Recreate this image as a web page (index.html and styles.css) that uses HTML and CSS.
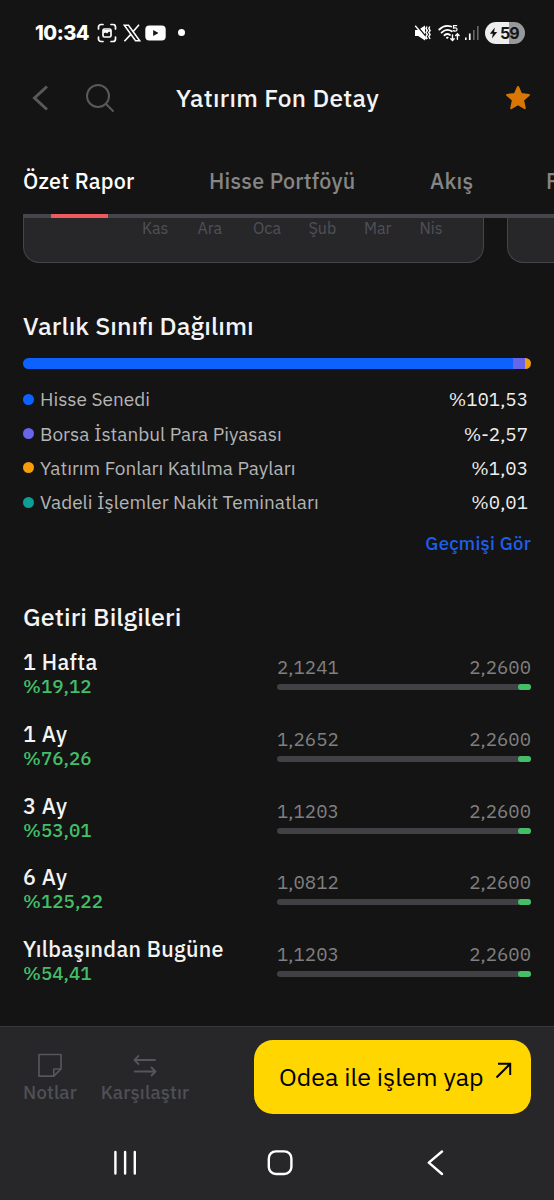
FILE: index.html
```html
<!DOCTYPE html>
<html lang="tr">
<head>
    <meta charset="UTF-8">
    <title>Yatırım Fon Detay</title>
    <link rel="stylesheet" href="styles.css">
</head>
<body>
    <div class="status-bar">
        <span class="clock">10:34</span>
        <svg class="capture" width="20" height="20" viewBox="0 0 20 20" fill="none" stroke="#fff" stroke-width="1.7" stroke-linecap="round">
            <path d="M1.5 6V4a2.5 2.5 0 0 1 2.5-2.5h2M14 1.5h2A2.5 2.5 0 0 1 18.5 4v2M18.5 14v2a2.5 2.5 0 0 1-2.5 2.5h-2M6 18.5H4A2.5 2.5 0 0 1 1.5 16v-2"/>
            <rect x="6" y="6" width="8" height="8" rx="1.5"/>
            <path d="M6.5 7h7v2.500l-1.500-1-2 2-1.500-1-2 1z" fill="#fff" stroke="none"/>
        </svg>
        <svg class="x-logo" width="18" height="18" viewBox="0 0 18 18" fill="none" stroke="#fff">
            <path d="M1.3 1.2h4.2l11.2 15.6h-4.2z" stroke-width="1.5"/>
            <path d="M16 .8L10.2 7.6M7.6 10.6L1.4 17.3" stroke-width="1.6"/>
        </svg>
        <svg class="video" width="21" height="16" viewBox="0 0 21 16">
            <rect x=".3" y=".6" width="20.4" height="14.8" rx="4" fill="#fff"/>
            <path d="M8.200 5v6l5.300-3z" fill="#141414"/>
        </svg>
        <span class="dot"></span>
        <div class="status-right">
            <svg width="17" height="18" viewBox="0 0 17 18">
                <path d="M1 6h3.2L11 1.5v15L4.2 12H1z" fill="#fff"/>
                <path d="M1.6 .6l12 14" stroke="#141414" stroke-width="1.600"/>
                <path d="M1.2 1.800l11.400 13.400" stroke="#fff" stroke-width="1.4"/>
                <path d="M13 2.500l-1 2 1.300 2-1.300 2 1.300 2-1.300 2 1.300 2.500M15.800 2.500l-1 2 1.300 2-1.300 2 1.300 2-1.300 2 1.300 2.500" fill="none" stroke="#fff" stroke-width="1.4"/>
            </svg>
            <svg class="wifi" width="22" height="18" viewBox="0 0 22 18" fill="none" stroke="#fff" stroke-width="1.8" stroke-linecap="round">
                <path d="M1.3 5.5C4.8 2 9.500 1.200 13.200 2.500M3.600 8.600c3-2.900 7-3.400 10.200-1.400M6.400 11.300c1.700-1.400 4-1.500 5.600-.4"/>
                <circle cx="9.2" cy="13.7" r=".7" fill="#fff" stroke-width="1"/>
                <path d="M14.5 11v5.500m-1.700-1.700l1.700 1.800 1.700-1.800M19.400 15.200V9.800m-1.700 1.700l1.700-1.800 1.700 1.800" stroke-width="1.400"/>
                <path d="M18.7 1.600h-3.200v2.500c3-.6 3.800.2 3.500 1.700-.3 1.500-2.300 1.500-3.700.8" stroke-width="1.200"/>
            </svg>
            <svg class="signal" width="15" height="16" viewBox="0 0 15 16">
                <path d="M1 12.5h1.600v2.500H1zM4.900 8.500h1.700V15H4.900z" fill="#fff"/>
                <path d="M9 5h1.600v10H9zM13 1h1.600v14H13z" fill="#666"/>
            </svg>
            <div class="battery">
                <svg width="9" height="12" viewBox="0 0 9 12"><path d="M5.800.4L.8 6.700h3L3 11.600l5.200-6.500H5.100z" fill="#141414"/></svg>
                <span>59</span>
            </div>
        </div>
    </div>

    <header class="header">
        <svg class="back" width="16" height="28" viewBox="0 0 16 28" fill="none" stroke="#59595c" stroke-width="3"><path d="M15 2.500L2.500 14 15 25.500"/></svg>
        <svg class="search" width="30" height="30" viewBox="0 0 30 30" fill="none" stroke="#59595c" stroke-width="2" stroke-linecap="round"><circle cx="12" cy="13" r="11"/><path d="M20 21l7 7"/></svg>
        <h1>Yatırım Fon Detay</h1>
        <svg class="star" width="26" height="26" viewBox="0 0 26 26" fill="#d97706" stroke="#d97706" stroke-width="2" stroke-linejoin="round"><path d="M13 2l3.200 7.100 7.700.8-5.800 5.200 1.700 8.100-6.800-4-6.800 4 1.700-8.100L2.100 9.900l7.700-.8z"/></svg>
    </header>

    <nav class="tabs">
        <span class="tab active">Özet Rapor</span>
        <span class="tab portfolio">Hisse Portföyü</span>
        <span class="tab flow">Akış</span>
        <span class="tab">F</span>
    </nav>
    <div class="tab-line"><div class="tab-marker"></div></div>

    <div class="cards">
        <div class="card">
            <span>Kas</span><span>Ara</span><span>Oca</span><span>Şub</span><span>Mar</span><span>Nis</span>
        </div>
        <div class="card next"></div>
    </div>

    <section class="allocation">
        <h2>Varlık Sınıfı Dağılımı</h2>
        <div class="allocation-bar">
            <div class="blue" style="width: 490px"></div>
            <div class="purple" style="width: 12px"></div>
            <div class="orange" style="width: 6px"></div>
        </div>
        <ul class="legend">
            <li><i class="blue"></i>Hisse Senedi<b class="num">%101,53</b></li>
            <li><i class="purple"></i>Borsa İstanbul Para Piyasası<b class="num">%-2,57</b></li>
            <li><i class="orange"></i>Yatırım Fonları Katılma Payları<b class="num">%1,03</b></li>
            <li><i class="teal"></i>Vadeli İşlemler Nakit Teminatları<b class="num">%0,01</b></li>
        </ul>
        <a class="history">Geçmişi Gör</a>
    </section>

    <section class="returns">
        <h2>Getiri Bilgileri</h2>
        <div class="return">
            <div class="period"><h3>1 Hafta</h3><p class="num">%19,12</p></div>
            <div class="range">
                <div class="limits num"><span>2,1241</span><span>2,2600</span></div>
                <div class="track"><div class="thumb"></div></div>
            </div>
        </div>
        <div class="return">
            <div class="period"><h3>1 Ay</h3><p class="num">%76,26</p></div>
            <div class="range">
                <div class="limits num"><span>1,2652</span><span>2,2600</span></div>
                <div class="track"><div class="thumb"></div></div>
            </div>
        </div>
        <div class="return">
            <div class="period"><h3>3 Ay</h3><p class="num">%53,01</p></div>
            <div class="range">
                <div class="limits num"><span>1,1203</span><span>2,2600</span></div>
                <div class="track"><div class="thumb"></div></div>
            </div>
        </div>
        <div class="return">
            <div class="period"><h3>6 Ay</h3><p class="num">%125,22</p></div>
            <div class="range">
                <div class="limits num"><span>1,0812</span><span>2,2600</span></div>
                <div class="track"><div class="thumb"></div></div>
            </div>
        </div>
        <div class="return">
            <div class="period"><h3>Yılbaşından Bugüne</h3><p class="num">%54,41</p></div>
            <div class="range">
                <div class="limits num"><span>1,1203</span><span>2,2600</span></div>
                <div class="track"><div class="thumb"></div></div>
            </div>
        </div>
    </section>

    <footer class="footer">
        <div class="actions">
            <div class="action notes">
                <svg width="24" height="24" viewBox="0 0 24 24" fill="none" stroke="#55555c" stroke-width="1.7" stroke-linejoin="round"><path d="M1 1.500h22V16l-7.200 7.200H1zM15.800 23v-7H23"/></svg>
                <span>Notlar</span>
            </div>
            <div class="action compare">
                <svg width="24" height="24" viewBox="0 0 24 24" fill="none" stroke="#55555c" stroke-width="1.8" stroke-linecap="round" stroke-linejoin="round"><path d="M22 7H1.800M5.500 2.900L1.500 7l4 4M1.800 18.500H22M18.500 14.500l4 4-4 4"/></svg>
                <span>Karşılaştır</span>
            </div>
            <button class="trade">
                <span>Odea ile işlem yap</span>
                <svg width="17" height="17" viewBox="0 0 17 17" fill="none" stroke="#000" stroke-width="2"><path d="M1.500 15.500L15 2M3 1.800h12.200V13"/></svg>
            </button>
        </div>
        <div class="system-nav">
            <svg width="26" height="26" viewBox="0 0 26 26" stroke="#fff" stroke-width="2.4" stroke-linecap="round"><path d="M3.400 2v21.500M13.100 2v21.500M22.800 2v21.500"/></svg>
            <svg width="26" height="26" viewBox="0 0 26 26" fill="none" stroke="#fff" stroke-width="2.4"><rect x="1.800" y="1.400" width="22.600" height="22.600" rx="7"/></svg>
            <svg width="26" height="26" viewBox="0 0 26 26" fill="none" stroke="#fff" stroke-width="2.4" stroke-linecap="round" stroke-linejoin="round"><path d="M20 1.500L6.800 12.700 20 24"/></svg>
        </div>
    </footer>
</body>
</html>
```
FILE: styles.css
```css
* {
    box-sizing: border-box;
}
body {
    margin: 0;
    width: 554px;
    height: 1200px;
    overflow: hidden;
    display: flex;
    flex-direction: column;
    background-color: #141414;
    color: #f4f4f5;
    font-family: "IBM Plex Sans", "Noto Sans", sans-serif;
}
h1, h2, h3, p, ul {
    margin: 0;
    padding: 0;
}
svg {
    display: block;
    flex: none;
}

/* status bar */
.status-bar {
    height: 65px;
    flex: none;
    padding: 0 29px 0 35px;
    display: flex;
    align-items: center;
    color: #fff;
}
.clock {
    width: 62px;
    font: 800 20px Inter, sans-serif;
    letter-spacing: -0.5px;
}
.x-logo {
    margin-left: 6px;
}
.video {
    margin-left: 4px;
}
.dot {
    width: 7px;
    height: 7px;
    margin-left: 12px;
    border-radius: 50%;
    background-color: #fff;
}
.status-right {
    margin-left: auto;
    display: flex;
    align-items: center;
}
.wifi {
    margin-left: 7px;
}
.signal {
    margin-left: 4px;
}
.battery {
    width: 40px;
    height: 22px;
    margin-left: 6px;
    padding-left: 4px;
    display: flex;
    align-items: center;
    gap: 2px;
    border-radius: 11px;
    background: linear-gradient(90deg, #eee 60%, #999 60%);
    color: #141414;
    font: 700 16px/22px Inter, sans-serif;
    letter-spacing: -1px;
}

/* header */
.header {
    height: 65px;
    flex: none;
    padding: 0 23px 0 32px;
    display: flex;
    align-items: center;
}
.search {
    margin-left: 38px;
}
.header h1 {
    margin-left: 60px;
    padding-top: 1px;
    font-size: 24.5px;
    font-weight: 500;
    letter-spacing: 0.3px;
    white-space: nowrap;
}
.star {
    margin-left: auto;
}

/* tabs */
.tabs {
    height: 84px;
    flex: none;
    padding: 36px 0 0 23px;
    display: flex;
    overflow: hidden;
    color: #858585;
    font-size: 21.5px;
    font-weight: 500;
    line-height: 30px;
    letter-spacing: 0.25px;
    white-space: nowrap;
}
.tab {
    flex: none;
}
.tab.active {
    width: 186px;
    color: #fff;
}
.portfolio {
    width: 221px;
}
.flow {
    width: 116px;
}
.tab-line {
    height: 4px;
    flex: none;
    margin-left: 23px;
    padding-left: 28px;
    background-color: #45454c;
}
.tab-marker {
    width: 57px;
    height: 4px;
    background-color: #ee5a5f;
}

/* bottom edge of the chart cards */
.cards {
    height: 45px;
    flex: none;
    margin-left: 23px;
    display: flex;
    gap: 23px;
    overflow: hidden;
}
.card {
    width: 461px;
    flex: none;
    padding-left: 118px;
    display: flex;
    border: 1.5px solid #45454a;
    border-top: none;
    border-radius: 0 0 16px 16px;
    background-color: #27272a;
    color: #505056;
    font-size: 16px;
    line-height: 21px;
}
.card.next {
    width: 47px;
    padding: 0;
    border-right: none;
    border-radius: 0 0 0 16px;
}
.card span {
    width: 55.5px;
}

h2 {
    font-size: 25px;
    font-weight: 500;
    line-height: 32px;
    letter-spacing: 0.1px;
}

/* asset allocation */
.allocation {
    height: 295px;
    flex: none;
    padding: 47px 23px 0;
}
.allocation-bar {
    height: 11px;
    margin-top: 16px;
    display: flex;
    border-radius: 6px;
    overflow: hidden;
}
.blue {
    background-color: #0d62fe;
}
.purple {
    background-color: #6865ed;
}
.orange {
    background-color: #f59e0b;
}
.teal {
    background-color: #0d9e96;
}
.legend {
    margin-top: 13px;
    padding-right: 3px;
    list-style: none;
}
.legend li {
    height: 34.4px;
    display: flex;
    align-items: center;
    color: #b5b5b5;
    font-size: 19px;
}
.legend i {
    width: 11px;
    height: 11px;
    margin-right: 6px;
    border-radius: 50%;
}
.legend .num {
    margin-left: auto;
    color: #f0f0f0;
    font-weight: 400;
}
/* dotted zeros */
.num {
    font-size: 18.9px;
    font-feature-settings: "ss04";
}
.history {
    display: block;
    margin-top: 10px;
    color: #1d5fe8;
    font-size: 18.5px;
    font-weight: 500;
    line-height: 26px;
    letter-spacing: 0.25px;
    text-align: right;
}

/* returns */
.returns {
    padding: 43px 23px 0;
    flex: 1;
}
.return {
    height: 71.8px;
    display: flex;
    justify-content: space-between;
}
.returns h2 {
    margin-bottom: 16px;
}
.period h3 {
    padding-top: 1px;
    font-size: 21.5px;
    font-weight: 500;
    line-height: 25px;
    letter-spacing: 0.35px;
    white-space: nowrap;
}
.period p {
    color: #43be68;
    font-weight: 500;
    line-height: 22px;
}
.range {
    width: 254px;
    padding-top: 5px;
}
.limits {
    height: 30px;
    display: flex;
    justify-content: space-between;
    color: #808080;
    line-height: 27px;
}
.track {
    height: 6px;
    display: flex;
    justify-content: flex-end;
    border-radius: 3px;
    background-color: #404045;
}
.thumb {
    width: 13px;
    border-radius: 3px;
    background-color: #45be68;
}

/* footer */
.footer {
    height: 174px;
    flex: none;
    padding: 13px 23px 0;
    border-top: 1px solid #39393d;
    background-color: #27272a;
}
.actions {
    height: 74px;
    display: flex;
}
.action {
    padding-top: 13px;
    display: flex;
    flex-direction: column;
    align-items: center;
    color: #4f4f56;
    font-size: 18.5px;
    font-weight: 500;
    line-height: 26px;
    letter-spacing: 0.2px;
}
.action span {
    margin-top: 2px;
}
.notes {
    width: 54px;
}
.compare {
    width: 88px;
    margin-left: 24px;
}
.trade {
    width: 277px;
    margin-left: auto;
    padding: 0 19px 2px 25px;
    display: flex;
    align-items: center;
    justify-content: space-between;
    border: none;
    border-radius: 19px;
    background-color: #ffd600;
    color: #000;
    font-family: inherit;
    font-size: 25px;
    white-space: nowrap;
}
.trade svg {
    margin-bottom: 11px;
}
.system-nav {
    padding: 36px 83px 0 89px;
    display: flex;
    justify-content: space-between;
}
```
